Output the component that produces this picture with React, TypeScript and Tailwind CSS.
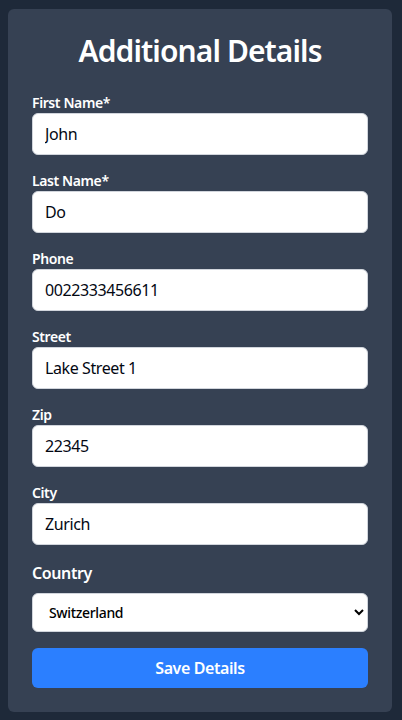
import React from "react";

const fields = [
  { label: "First Name*", value: "John" },
  { label: "Last Name*", value: "Do" },
  { label: "Phone", value: "0022333456611" },
  { label: "Street", value: "Lake Street 1" },
  { label: "Zip", value: "22345" },
  { label: "City", value: "Zurich" },
];

export default function App() {
  return (
    <div
      className="min-h-screen bg-gray-800 flex items-center pl-2 tracking-tight"
      style={{ fontFamily: '"Noto Sans", "Open Sans", sans-serif' }}
    >
      <div className="w-full max-w-sm bg-gray-700 rounded-md p-6">
        <h1 className="text-3xl font-semibold text-white text-center mb-6 tracking-[-0.03em]">
          Additional Details
        </h1>
        <form className="flex flex-col gap-4" onSubmit={(e) => e.preventDefault()}>
          {fields.map((f) => (
            <div key={f.label} className="flex flex-col">
              <label className="text-sm font-semibold text-white">{f.label}</label>
              <input
                className="w-full bg-white border border-gray-300 rounded-md px-3 py-2 text-base text-gray-950 tracking-tight outline-none"
                defaultValue={f.value}
              />
            </div>
          ))}
          <div className="flex flex-col">
            <label className="text-base font-semibold text-white mb-2">Country</label>
            <select
              className="w-full bg-white border border-gray-300 rounded-md px-3 py-2 text-sm font-medium text-black tracking-tight"
              defaultValue="Switzerland"
            >
              <option>Switzerland</option>
              <option>Germany</option>
              <option>Austria</option>
            </select>
          </div>
          <button
            type="submit"
            className="w-full bg-blue-500 text-white font-semibold rounded-md py-2 text-base tracking-tight"
          >
            Save Details
          </button>
        </form>
      </div>
    </div>
  );
}
